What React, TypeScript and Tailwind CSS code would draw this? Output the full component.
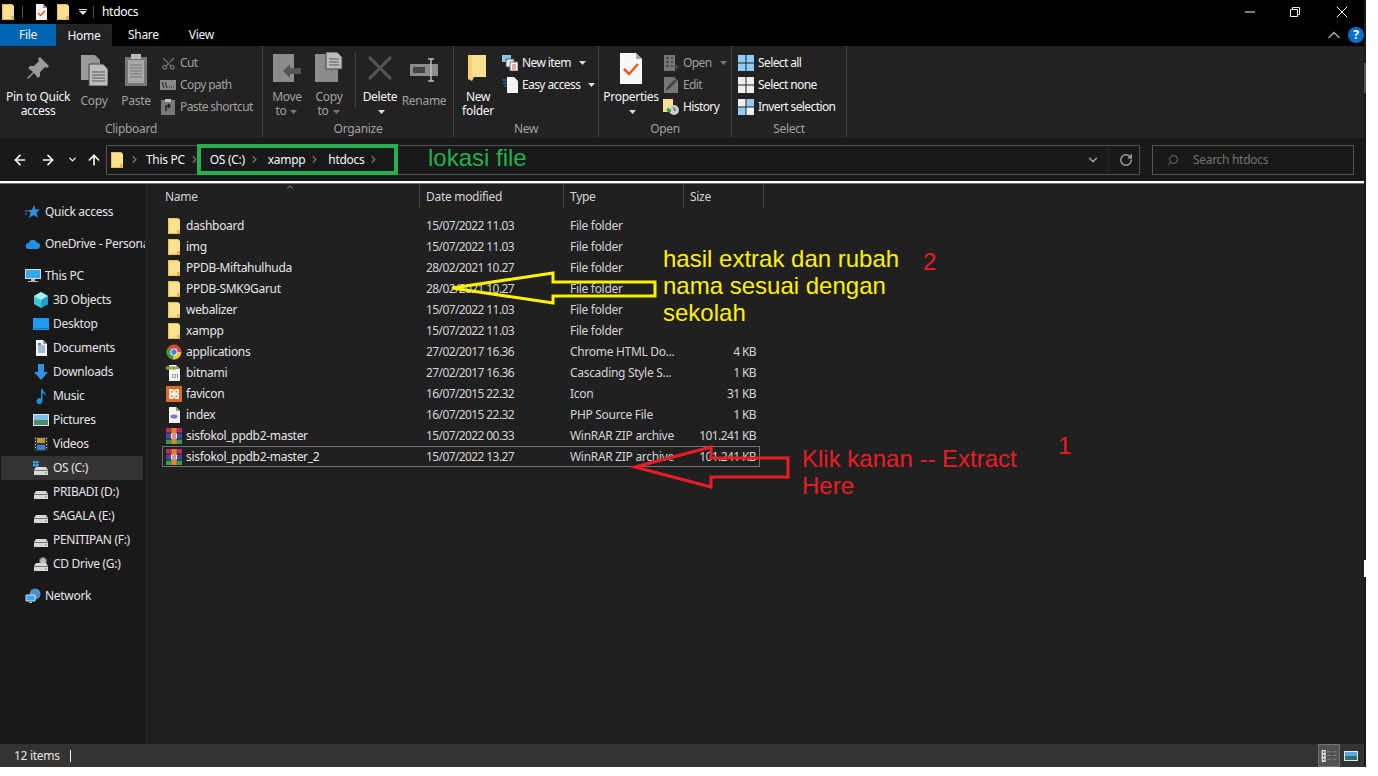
import { ArrowLeft, ArrowRight, ArrowUp, ChevronDown, ChevronRight, ChevronUp, RotateCw, Scissors, Search, Minus, X } from "lucide-react";
import type { ReactNode } from "react";

const Folder = ({ className = "w-4 h-4" }: { className?: string }) => (
  <svg viewBox="0 0 16 16" className={className}>
    <path d="M2 0h10l2 2v14H2z" fill="#fbe08f" />
    <path d="M2 0h10v1H3v14h10v-3h1v4H2z" fill="#e8bf55" />
    <path d="M11 12h3v4h-3z" fill="#e3b94f" />
  </svg>
);

const Doc = ({ children }: { children?: ReactNode }) => (
  <svg viewBox="0 0 16 16" className="w-4 h-4">
    <path d="M3 0h7l4 4v12H3z" fill="#f4f4f4" />
    <path d="M10 0l4 4h-4z" fill="#9a9a9a" />
    {children}
  </svg>
);

const Rar = () => (
  <svg viewBox="0 0 16 16" className="w-4 h-4">
    <path d="M0 0h16v4.500H0z" fill="#c02a63" />
    <path d="M0 5.500h16v5H0z" fill="#4b45a8" />
    <path d="M0 11.500h16V16H0z" fill="#2e9d4f" />
    <path d="M5.500 0h5v5.500h-5zM5.500 10.500h5V16h-5z" fill="#e2812b" />
    <path d="M5 5.500h6v5H5z" fill="#f4f4f4" />
    <path d="M6.500 6h1v4h-1zM8.500 6h1v4h-1z" fill="#b02a2a" />
  </svg>
);

const Chrome = () => (
  <svg viewBox="0 0 16 16" className="w-4 h-4">
    <circle cx="8" cy="8" r="7.5" fill="#e0453a" />
    <path d="M8 8L1.5 4.2A7.5 7.5 0 0 0 7 15.4z" fill="#2f9e4f" />
    <path d="M8 8h7.3A7.5 7.5 0 0 1 7 15.4z" fill="#f7c52b" />
    <circle cx="8" cy="8" r="3.6" fill="#fff" />
    <circle cx="8" cy="8" r="2.7" fill="#3f80ea" />
  </svg>
);

const fileIcons: Record<string, ReactNode> = {
  folder: <Folder />,
  chrome: <Chrome />,
  css: (
    <Doc>
      <path d="M0 1.500h10v3H0z" fill="#93a63a" />
      <path d="M6 9h1.500v1.500H6zM8.500 9H10v1.500H8.500zM6 11.500h1.500V13H6zM8.500 11.500H10V13H8.500zM11 9h1v4h-1z" fill="#888" />
    </Doc>
  ),
  xampp: (
    <svg viewBox="0 0 16 16" className="w-4 h-4">
      <path d="M0 0h16v16H0z" fill="#e0681f" />
      <path d="M3 3h4l1 2 1-2h4v4l-1 1 1 1v4H9l-1-2-1 2H3V9l1-1-1-1z" fill="#fdf3e8" />
      <path d="M5 5h1.500v1.500H5zM9.500 5H11v1.500H9.500zM5 9.500h1.500V11H5zM9.500 9.500H11V11H9.500z" fill="#e0681f" />
    </svg>
  ),
  php: (
    <Doc>
      <ellipse cx="8" cy="9.500" rx="3.500" ry="2" fill="#8a72c0" />
    </Doc>
  ),
  rar: <Rar />,
};

const files = [
  ["dashboard", "15/07/2022 11.03", "File folder", "", "folder"],
  ["img", "15/07/2022 11.03", "File folder", "", "folder"],
  ["PPDB-Miftahulhuda", "28/02/2021 10.27", "File folder", "", "folder"],
  ["PPDB-SMK9Garut", "28/02/2021 10.27", "File folder", "", "folder"],
  ["webalizer", "15/07/2022 11.03", "File folder", "", "folder"],
  ["xampp", "15/07/2022 11.03", "File folder", "", "folder"],
  ["applications", "27/02/2017 16.36", "Chrome HTML Do...", "4 KB", "chrome"],
  ["bitnami", "27/02/2017 16.36", "Cascading Style S...", "1 KB", "css"],
  ["favicon", "16/07/2015 22.32", "Icon", "31 KB", "xampp"],
  ["index", "16/07/2015 22.32", "PHP Source File", "1 KB", "php"],
  ["sisfokol_ppdb2-master", "15/07/2022 00.33", "WinRAR ZIP archive", "101.241 KB", "rar"],
  ["sisfokol_ppdb2-master_2", "15/07/2022 13.27", "WinRAR ZIP archive", "101.241 KB", "rar"],
];

const Drive = ({ windows, cd }: { windows?: boolean; cd?: boolean }) => (
  <svg viewBox="0 0 16 16" className="w-4 h-4">
    {windows && <path d="M0 1h2.500v2.500H0zM3 1h2.500v2.500H3zM0 4h2.500v2.500H0zM3 4h2.500v2.500H3z" fill="#35a8f0" />}
    {cd && <circle cx="10" cy="5" r="3.500" fill="#bbb" stroke="#666" />}
    <path d="M3 7h10l2 3v5H1v-5z" fill="#d8d8d8" />
    <path d="M1 10h14v1H1z" fill="#777" />
    <path d="M12 12h1.500v1.500H12z" fill="#4ccb4c" />
  </svg>
);

const navIcons: Record<string, ReactNode> = {
  quick: (
    <svg viewBox="0 0 16 16" className="w-4 h-4">
      <path d="M9 1l1.500 4.500H15l-3.500 3 1.200 5L8.500 11 4 14l1.700-5.200L3 6h4z" fill="#2f94e8" />
      <path d="M0 7h3M0 10h2" stroke="#2f94e8" />
    </svg>
  ),
  cloud: (
    <svg viewBox="0 0 16 16" className="w-4 h-4">
      <path d="M4 13a3 3 0 0 1-.5-6A4.500 4.500 0 0 1 12 6.500 3.300 3.300 0 0 1 12.500 13z" fill="#1f8fe0" />
    </svg>
  ),
  pc: (
    <svg viewBox="0 0 16 16" className="w-4 h-4">
      <path d="M0 1h16v10H0z" fill="#d8d8d8" />
      <path d="M1 2h14v8H1z" fill="#35a8f0" />
      <path d="M6 11h4v2H6zM3 13h10v1H3z" fill="#bbb" />
    </svg>
  ),
  cube: (
    <svg viewBox="0 0 16 16" className="w-4 h-4">
      <path d="M8 0l7 4v8l-7 4-7-4V4z" fill="#3cc6d8" />
      <path d="M8 0l7 4-7 4-7-4z" fill="#a5f0f2" />
      <path d="M8 8v8l7-4V4z" fill="#1f9fc4" />
    </svg>
  ),
  desktop: (
    <svg viewBox="0 0 16 16" className="w-4 h-4">
      <path d="M0 2h16v12H0z" fill="#1e9bf0" />
      <path d="M1 12h14v1H1z" fill="#0f6fc0" />
    </svg>
  ),
  docs: (
    <Doc>
      <path d="M5 6h7M5 8h7M5 10h7M5 12h7" stroke="#5a7fa8" />
      <path d="M5 3h3v2H5z" fill="#3f80c8" />
    </Doc>
  ),
  down: (
    <svg viewBox="0 0 16 16" className="w-4 h-4">
      <path d="M5 0h6v8h4l-7 8-7-8h4z" fill="#2f94e8" />
    </svg>
  ),
  music: (
    <svg viewBox="0 0 16 16" className="w-4 h-4">
      <path d="M8 1h1.500c.5 3 4 3 3 7-.5-2-2-3-3-3v8a3 3 0 1 1-1.500-2.500z" fill="#1f8fe0" />
    </svg>
  ),
  pictures: (
    <svg viewBox="0 0 16 16" className="w-4 h-4">
      <path d="M0 2h16v12H0z" fill="#e4e4e4" />
      <path d="M1 3h14v5H1z" fill="#7cc0ea" />
      <path d="M1 8h14v5H1z" fill="#4f8a6a" />
    </svg>
  ),
  videos: (
    <svg viewBox="0 0 16 16" className="w-4 h-4">
      <path d="M1 1h14v14H1z" fill="#333" />
      <path d="M4 2h8v5H4z" fill="#b59a3a" />
      <path d="M4 9h8v5H4z" fill="#3f80c8" />
      <path d="M2 2h1v1H2zM2 5h1v1H2zM2 8h1v1H2zM2 11h1v1H2zM13 2h1v1h-1zM13 5h1v1h-1zM13 8h1v1h-1zM13 11h1v1h-1z" fill="#ccc" />
    </svg>
  ),
  os: <Drive windows />,
  drive: <Drive />,
  cd: <Drive cd />,
  network: (
    <svg viewBox="0 0 16 16" className="w-4 h-4">
      <circle cx="10" cy="6" r="5.500" fill="#4f8fc8" />
      <path d="M1 7h9v6H1z" fill="#35a8f0" stroke="#ddd" />
      <path d="M4 14h3v1H4z" fill="#bbb" />
    </svg>
  ),
};

const nav = [
  { label: "Quick access", icon: "quick", top: true },
  { label: "OneDrive - Personal", icon: "cloud", top: true },
  { label: "This PC", icon: "pc", top: true },
  { label: "3D Objects", icon: "cube" },
  { label: "Desktop", icon: "desktop" },
  { label: "Documents", icon: "docs" },
  { label: "Downloads", icon: "down" },
  { label: "Music", icon: "music" },
  { label: "Pictures", icon: "pictures" },
  { label: "Videos", icon: "videos" },
  { label: "OS (C:)", icon: "os", selected: true },
  { label: "PRIBADI (D:)", icon: "drive" },
  { label: "SAGALA (E:)", icon: "drive" },
  { label: "PENITIPAN (F:)", icon: "drive" },
  { label: "CD Drive (G:)", icon: "cd" },
  { label: "Network", icon: "network", top: true },
];

const gray = "#9a9a9a";

const Caret = ({ muted }: { muted?: boolean }) => (
  <svg viewBox="0 0 8 4" className="inline-block w-2 h-1 ml-1 align-middle">
    <path d="M0 0h7L3.500 4z" fill={muted ? "#777" : "#ddd"} />
  </svg>
);

function BigButton({ icon, label, width, muted, caret }: { icon: ReactNode; label: ReactNode; width: string; muted?: boolean; caret?: boolean }) {
  return (
    <div className={`flex flex-col items-center ${width} ${muted ? "text-neutral-400" : "text-neutral-100"}`}>
      <div className="h-9 flex items-center justify-center">{icon}</div>
      <div className="mt-1.5 text-center leading-3.5 whitespace-nowrap">
        {label}
        {caret && <Caret muted={muted} />}
      </div>
    </div>
  );
}

function SmallButton({ icon, label, muted, caret }: { icon: ReactNode; label: string; muted?: boolean; caret?: boolean }) {
  return (
    <div className={`h-5.5 flex items-center gap-1 whitespace-nowrap tracking-tighter ${muted ? "text-neutral-400" : "text-neutral-100"}`}>
      <span className="w-4 h-4 flex items-center justify-center shrink-0">{icon}</span>
      <span>{label}</span>
      {caret && <Caret muted={muted} />}
    </div>
  );
}

function Group({ label, width, children }: { label: string; width: string; children: ReactNode }) {
  return (
    <div className={`${width} shrink-0 flex flex-col border-r border-neutral-700`}>
      <div className="h-18 flex pt-1.5">{children}</div>
      <div className="h-5 pt-0.5 flex items-center justify-center text-neutral-400">{label}</div>
    </div>
  );
}

const Tile = ({ colors }: { colors: string[] }) => (
  <svg viewBox="0 0 16 16" className="w-4 h-4">
    <path d="M0 0h7.500v7.500H0z" fill={colors[0]} />
    <path d="M8.500 0H16v7.500H8.500z" fill={colors[1]} />
    <path d="M0 8.500h7.500V16H0z" fill={colors[2]} />
    <path d="M8.500 8.500H16V16H8.500z" fill={colors[3]} />
  </svg>
);

const Sep = () => <ChevronRight size={11} strokeWidth={3} className="text-neutral-500 shrink-0" />;

export default function App() {
  return (
    <div className="w-screen h-screen bg-white overflow-hidden relative text-xs tracking-tight" style={{ fontFamily: '"Noto Sans", sans-serif' }}>
      <div className="w-[1366px] h-[767px] flex bg-black">
        <div className="w-[1364px] flex flex-col">
          {/* title bar */}
          <div className="h-6 bg-black flex items-center text-white shrink-0">
            <Folder className="w-4 h-4" />
            <span className="w-px h-3 bg-neutral-600 ml-1.5" />
            <span className="ml-2.5"><Doc><path d="M5 9l2.500 2.500L12 7" stroke="#e8581c" strokeWidth="1.500" fill="none" /></Doc></span>
            <Folder className="w-4 h-4 ml-1.5" />
            <svg viewBox="0 0 8 6" className="w-2 h-1.5 ml-2"><path d="M0 0h8v1H0zM0 2h8L4 6z" fill="#ddd" /></svg>
            <span className="w-px h-3 bg-neutral-600 ml-1.5" />
            <span className="ml-2">htdocs</span>
            <div className="ml-auto flex items-center text-neutral-100">
              <Minus size={16} strokeWidth={1} absoluteStrokeWidth className="mr-8" />
              <svg viewBox="0 0 10 10" className="w-2.5 h-2.5 mr-8"><path d="M.5 2.500h7v7h-7zM2.500 2.500v-2h7v7h-2" fill="none" stroke="#eee" /></svg>
              <X size={20} strokeWidth={1} absoluteStrokeWidth className="mr-3" />
            </div>
          </div>

          {/* tabs */}
          <div className="h-5.5 bg-black flex items-center text-neutral-100 shrink-0">
            <div className="w-14 h-full bg-[#0063b1] flex items-center justify-center">File</div>
            <div className="w-14 h-full bg-[#222222] border-x border-t border-neutral-800 flex items-center justify-center">Home</div>
            <span className="ml-4">Share</span>
            <span className="ml-7.5">View</span>
            <div className="ml-auto flex items-center">
              <ChevronUp size={20} strokeWidth={2} className="text-neutral-400 mr-1" />
              <span className="w-4 h-4 rounded-full bg-[#0b6fcf] text-white font-bold flex items-center justify-center">?</span>
            </div>
          </div>

          {/* ribbon */}
          <div className="h-23 bg-[#222222] flex border-b border-neutral-800 shrink-0">
            <Group label="Clipboard" width="w-[263px]">
              <BigButton
                width="w-18 ml-0.5"
                label={<>Pin to Quick<br />access</>}
                icon={<svg viewBox="0 0 24 24" className="w-6 h-6"><path d="M14 1l9 9-2 2-2-1-5 5 0 4-2 2-4-5-6 6-1-1 6-6-5-4 2-2 4 0 5-5-1-2z" fill={gray} /></svg>}
              />
              <BigButton
                width="w-9 ml-0.5"
                muted
                label="Copy"
                icon={<svg viewBox="0 0 28 32" className="w-7 h-8"><path d="M1 1h14l5 5v20H1z" fill={gray} /><path d="M9 10h14l5 5v17H9z" fill="#bdbdbd" stroke="#444" /><path d="M12 18h13M12 21h13M12 24h13M12 27h13" stroke="#555" /></svg>}
              />
              <BigButton
                width="w-9 ml-1.5"
                muted
                label="Paste"
                icon={<svg viewBox="0 0 24 32" className="w-6 h-8"><path d="M1 3h22v29H1z" fill="#777" /><path d="M4 6h16v23H4z" fill="#a8a8a8" /><path d="M7 0h10v5H7z" fill="#bbb" /><path d="M6 11h12M6 14h12M6 17h12M6 20h12M6 23h12" stroke="#777" /></svg>}
              />
              <div className="ml-1.5">
                <SmallButton muted label="Cut" icon={<Scissors size={15} className="text-neutral-500 -rotate-90" />} />
                <SmallButton muted label="Copy path" icon={<svg viewBox="0 0 16 10" className="w-4 h-2.5"><path d="M0 0h16v10H0z" fill="#888" /><path d="M2 2l2 6M5 2l2 6M9 7h1M11 7h1M13 7h1" stroke="#222" /></svg>} />
                <SmallButton muted label="Paste shortcut" icon={<svg viewBox="0 0 14 16" className="w-3.5 h-4"><path d="M0 1h14v15H0z" fill="#777" /><path d="M4 0h6v3H4z" fill="#bbb" /><path d="M5 12V7h4M7 5l2 2-2 2" stroke="#222" strokeWidth="1.500" fill="none" /></svg>} />
              </div>
            </Group>

            <Group label="Organize" width="w-[191px]">
              <BigButton
                width="w-10 ml-1"
                muted
                caret
                label={<>Move<br />to</>}
                icon={<svg viewBox="0 0 28 32" className="w-7 h-8"><path d="M0 2h21v28H0z" fill="#8c8c8c" /><path d="M28 16H17v-4l-7 7 7 7v-4h11z" fill="#555" /></svg>}
              />
              <BigButton
                width="w-10 ml-0.5"
                muted
                caret
                label={<>Copy<br />to</>}
                icon={<svg viewBox="0 0 28 32" className="w-7 h-8"><path d="M0 2h23v28H0z" fill="#8c8c8c" /><path d="M11 0h11l5 5v12H11z" fill="#bdbdbd" stroke="#444" /><path d="M14 7h10M14 10h10M14 13h10" stroke="#555" /></svg>}
              />
              <span className="w-px h-14 bg-neutral-700 ml-1.5" />
              <BigButton
                width="w-10 ml-1"
                caret
                label={<>Delete<br /></>}
                icon={<svg viewBox="0 0 24 24" className="w-6 h-6"><path d="M1 1l22 22M23 1L1 23" stroke="#555" strokeWidth="3" /></svg>}
              />
              <BigButton
                width="w-12"
                muted
                label="Rename"
                icon={<svg viewBox="0 0 28 24" className="w-7 h-6"><path d="M0 6h28v12H0z" fill="#8c8c8c" /><path d="M3 9h12v6H3z" fill="#444" /><path d="M18 1h6M21 1v22M18 23h6" stroke="#bbb" strokeWidth="1.500" /></svg>}
              />
            </Group>

            <Group label="New" width="w-[145px]">
              <BigButton
                width="w-10 ml-1"
                label={<>New<br />folder</>}
                icon={<svg viewBox="0 0 20 28" className="w-5 h-7"><path d="M0 1h18v22H6l-2 4-4-2z" fill="#f6cf6e" /><path d="M4 1h14v22H4z" fill="#fbe08f" /></svg>}
              />
              <div className="ml-1">
                <SmallButton caret label="New item" icon={<svg viewBox="0 0 16 16" className="w-4 h-4"><path d="M0 0h9v7H0z" fill="#8fc5ea" /><path d="M4 4h8v8H4z" fill="#eee" stroke="#555" /><path d="M8 7h8v9H8z" fill="#fff" stroke="#777" /><path d="M10 10h4M10 12h4M10 14h4" stroke="#c55" /></svg>} />
                <SmallButton caret label="Easy access" icon={<svg viewBox="0 0 16 16" className="w-4 h-4"><path d="M5 0h7l4 4v12H5z" fill="#f4f4f4" /><path d="M0 3h5M1 6h4M2 9h3" stroke="#2f7fd0" /></svg>} />
              </div>
            </Group>

            <Group label="Open" width="w-[133px]">
              <BigButton
                width="w-14 ml-1"
                caret
                label={<>Properties<br /></>}
                icon={<svg viewBox="0 0 24 32" className="w-6 h-8"><path d="M1 1h16l6 6v25H1z" fill="#f8f8f8" /><path d="M17 1l6 6h-6z" fill="#aaa" /><path d="M5 17l5 5 9-10" stroke="#e8581c" strokeWidth="2.500" fill="none" /></svg>}
              />
              <div className="ml-1">
                <SmallButton muted caret label="Open" icon={<svg viewBox="0 0 16 16" className="w-4 h-4"><path d="M1 0h11v16H1z" fill="#777" /><path d="M3 3h3M8 3h2M3 7h3M8 7h2M3 11h3M8 11h2" stroke="#222" /><path d="M11 12h5M13.500 9.500v5" stroke="#555" /></svg>} />
                <SmallButton muted label="Edit" icon={<svg viewBox="0 0 16 16" className="w-4 h-4"><path d="M1 0h10l4 4v12H1z" fill="#777" /><path d="M3 14l1-4 8-8 2 2-8 8z" fill="#444" /></svg>} />
                <SmallButton label="History" icon={<svg viewBox="0 0 16 16" className="w-4 h-4"><path d="M0 0h10v13H0z" fill="#fbe08f" /><circle cx="11" cy="11" r="5" fill="#ccc" /><path d="M11 8v3h2" stroke="#555" fill="none" /><path d="M3 11l3-3v2h2v3H6v1z" fill="#2fa84f" /></svg>} />
              </div>
            </Group>

            <Group label="Select" width="w-[115px]">
              <div className="ml-1.5">
                <SmallButton label="Select all" icon={<Tile colors={["#8fcbf7", "#8fcbf7", "#8fcbf7", "#8fcbf7"]} />} />
                <SmallButton label="Select none" icon={<Tile colors={["#eee", "#eee", "#eee", "#eee"]} />} />
                <SmallButton label="Invert selection" icon={<Tile colors={["#eee", "#8fcbf7", "#8fcbf7", "#eee"]} />} />
              </div>
            </Group>
          </div>

          {/* address bar */}
          <div className="h-[43px] bg-[#191919] flex items-center pl-1.5 text-neutral-100 shrink-0">
            <span className="w-7 flex justify-center"><ArrowLeft size={16} strokeWidth={2.5} /></span>
            <span className="w-7 flex justify-center"><ArrowRight size={16} strokeWidth={2.5} /></span>
            <span className="w-4 ml-0.5 flex justify-center"><ChevronDown size={11} strokeWidth={3} /></span>
            <span className="w-5 ml-1 flex justify-center"><ArrowUp size={16} strokeWidth={2.5} /></span>
            <div className="ml-0.5 w-[1034px] h-7.5 border border-neutral-600 flex items-center pl-0.5 gap-1">
              <Folder />
              <Sep />
              <span className="ml-0.5">This PC</span>
              <Sep />
              <span className="ml-1.5">OS (C:)</span>
              <Sep />
              <span className="ml-1">xampp</span>
              <Sep />
              <span className="ml-1">htdocs</span>
              <Sep />
              <ChevronDown size={14} strokeWidth={2.5} className="ml-auto text-neutral-400" />
              <span className="w-px h-full bg-neutral-800 ml-1" />
              <RotateCw size={14} strokeWidth={2.5} className="text-neutral-400 mx-1.5" />
            </div>
            <div className="ml-3 w-[202px] h-7.5 border border-neutral-600 flex items-center pl-3.5 gap-3.5 text-neutral-500">
              <Search size={12} className="-scale-x-100" />
              <span>Search htdocs</span>
            </div>
          </div>

          <div className="h-0.5 bg-white shrink-0" />
          <div className="h-px bg-neutral-500 shrink-0" />

          {/* body */}
          <div className="flex-1 min-h-0 flex">
            <aside className="w-[146px] shrink-0 bg-[#191919] border-r border-neutral-800 pt-4 overflow-hidden text-neutral-200">
              {nav.map((item) => (
                <div
                  key={item.label}
                  className={`h-6 ml-px flex items-center gap-1 whitespace-nowrap overflow-hidden ${item.top ? "pl-6 mt-2 first:mt-0" : "pl-8"} ${item.selected ? "bg-[#333333] mr-0.5" : ""}`}
                >
                  <span className="w-4 h-4 shrink-0">{navIcons[item.icon]}</span>
                  <span>{item.label}</span>
                </div>
              ))}
            </aside>

            <main className="flex-1 bg-[#202020] pl-4 min-w-0">
              <div className="flex h-[25px] text-neutral-300 relative">
                <div className="w-[258px] pl-0.75 flex items-center border-r border-neutral-700">Name</div>
                <div className="w-36 pl-1.5 flex items-center border-r border-neutral-700">Date modified</div>
                <div className="w-30 pl-1.5 flex items-center border-r border-neutral-700">Type</div>
                <div className="w-20 pl-1.5 flex items-center border-r border-neutral-700">Size</div>
                <ChevronUp size={10} strokeWidth={2} className="absolute left-[123px] -top-0.5 text-neutral-400" />
              </div>
              <div className="pt-1.5">
                {files.map(([name, date, type, size, icon], i) => (
                  <div key={name} className={`flex items-center h-[21px] w-[598px] border ${i === 11 ? "border-neutral-500" : "border-transparent"}`}>
                    <div className="w-[257px] pl-0.75 flex items-center gap-1 text-neutral-200">
                      <span className="w-4 h-4 shrink-0">{fileIcons[icon]}</span>
                      {name}
                    </div>
                    <div className="w-36 pl-1.5 text-neutral-300 tracking-tighter">{date}</div>
                    <div className="w-30 pl-1.5 text-neutral-300">{type}</div>
                    <div className="w-[75px] pr-0.75 text-right text-neutral-300 tracking-tighter">{size}</div>
                  </div>
                ))}
              </div>
            </main>
          </div>

          {/* status bar */}
          <div className="h-[23px] bg-[#333333] flex items-center pl-3.5 text-neutral-200 shrink-0">
            <span>12 items</span>
            <span className="w-px h-3 bg-neutral-100 ml-2.5" />
            <div className="ml-auto h-full flex items-center">
              <div className="w-[22px] h-full bg-neutral-600 border border-neutral-500 flex flex-col justify-center items-center">
                <svg viewBox="0 0 16 13" className="w-4 h-3"><path d="M0 0h4.500v13H0z" fill="#ddd" /><path d="M6 2h4M12 2h4M6 6h4M12 6h4M6 10h4M12 10h4" stroke="#888" /><path d="M1.500 1.500h1.500v1.500H1.500zM1.500 5.500h1.500v1.500H1.500zM1.500 9.500h1.500v1.500H1.500z" fill="#333" /></svg>
              </div>
              <div className="ml-1 mr-1.5 w-3.5 h-2.5 bg-neutral-200 p-px flex flex-col">
                <div className="flex-1 bg-[#5aa5e8]" />
                <div className="flex-1 bg-[#2f6f6a]" />
              </div>
            </div>
          </div>
        </div>

        {/* window edge */}
        <div className="w-0.5 bg-[#1a1a1a] relative">
          <div className="absolute left-0 top-[63px] w-0.5 h-[30px] bg-neutral-600" />
          <div className="absolute left-0 top-[560px] w-0.5 h-[17px] bg-white" />
        </div>
      </div>

      {/* annotations drawn over the screenshot */}
      <div className="absolute left-[197px] top-[144px] w-[201px] h-[31px] border-4 border-[#22b14c]" />
      <svg className="absolute inset-0 w-full h-full pointer-events-none">
        <path d="M452 288L553 273V282H655V296H553V303Z" fill="none" stroke="#fff200" strokeWidth="3" />
        <path d="M635 467L711 447V458H788V477H711V487Z" fill="none" stroke="#ed1c24" strokeWidth="3" />
      </svg>
      <div className="absolute left-[428px] top-[142px] text-2xl tracking-normal text-[#22b14c]" style={{ fontFamily: '"Liberation Sans", sans-serif' }}>lokasi file</div>
      <div className="absolute left-[663px] top-[245px] w-[250px] text-2xl tracking-normal leading-[27px] text-[#fff200]" style={{ fontFamily: '"Liberation Sans", sans-serif' }}>
        hasil extrak dan rubah nama sesuai dengan sekolah
      </div>
      <div className="absolute left-[923px] top-[246px] text-2xl tracking-normal text-[#ed1c24]" style={{ fontFamily: '"Liberation Sans", sans-serif' }}>2</div>
      <div className="absolute left-[802px] top-[445px] w-[230px] text-2xl tracking-normal leading-[27px] text-[#ed1c24]" style={{ fontFamily: '"Liberation Sans", sans-serif' }}>
        Klik kanan -- Extract Here
      </div>
      <div className="absolute left-[1058px] top-[430px] text-2xl tracking-normal text-[#ed1c24]" style={{ fontFamily: '"Liberation Sans", sans-serif' }}>1</div>
    </div>
  );
}
